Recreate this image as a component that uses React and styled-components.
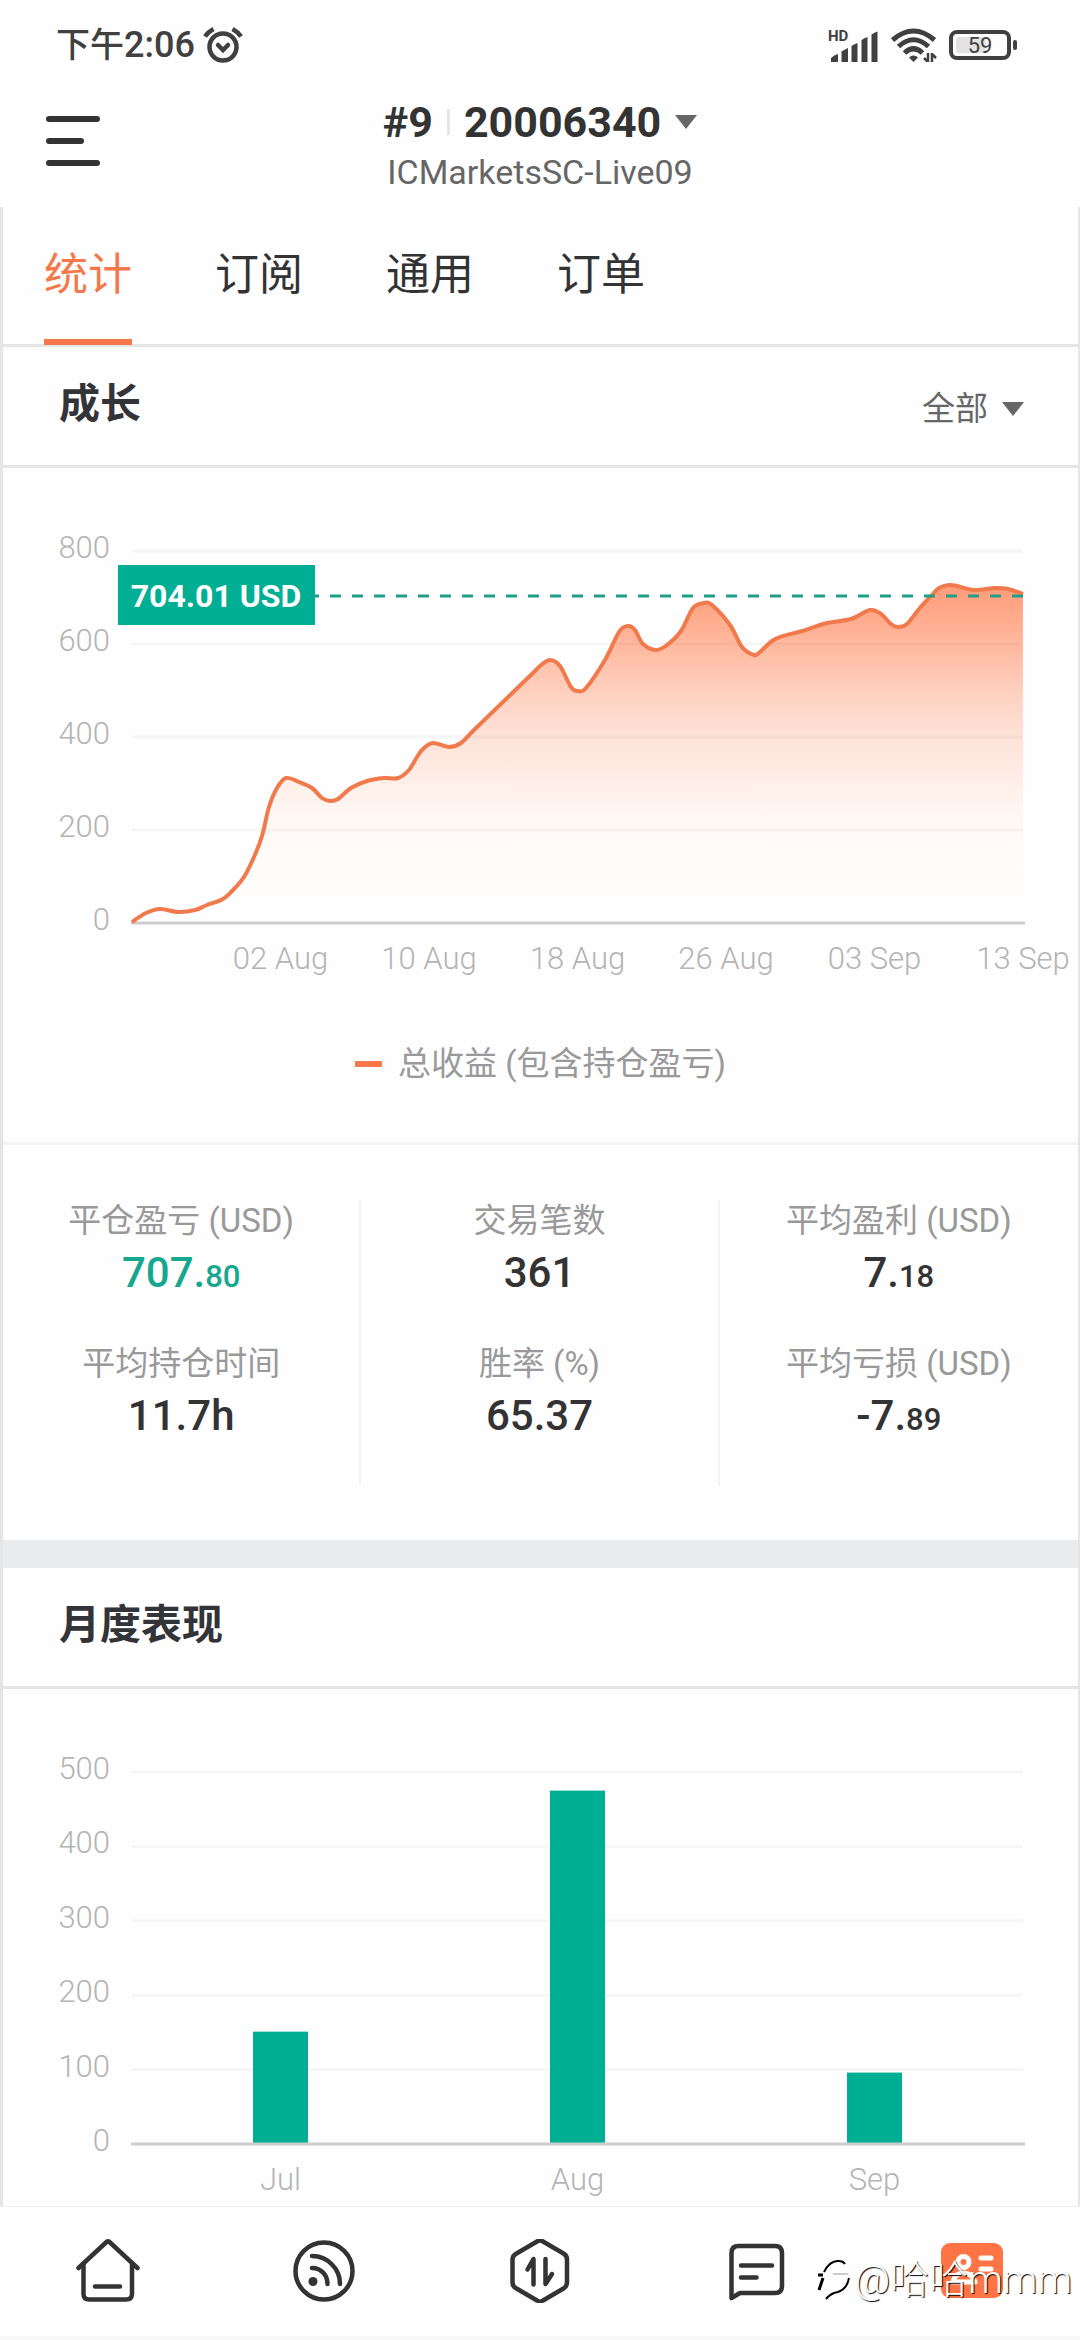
import { useState } from "react";
import styled, { createGlobalStyle } from "styled-components";

const GlobalStyle = createGlobalStyle`
  * {
    box-sizing: border-box;
  }

  body {
    margin: 0;
    background: #fefefe;
    color: #333333;
    font-family: Roboto, "Noto Sans CJK SC", sans-serif;
  }

  button, select {
    padding: 0;
    border: 0;
    background: none;
    color: inherit;
    font: inherit;
  }
`;

const Page = styled.div`
  display: flex;
  flex-direction: column;
  min-height: 100vh;
`;

const StatusBar = styled.div`
  display: flex;
  align-items: center;
  justify-content: space-between;
  height: 90px;
  padding: 0 62px 0 56px;
  color: #404040;
`;

const StatusGroup = styled.div`
  display: flex;
  align-items: center;
  gap: ${(props) => props.$gap};
`;

const Clock = styled.span`
  font-size: 34px;
  font-weight: 500;
  line-height: 44px;
`;

const ClockDigits = styled.span`
  font-size: 36px;
`;

const Header = styled.header`
  display: grid;
  grid-template-columns: 1fr auto 1fr;
  align-items: start;
  padding: 5px 44px 12px;
`;

const MenuButton = styled.button`
  width: 58px;
  height: 58px;
  margin-top: 17px;
`;

const Account = styled.div`
  text-align: center;
`;

const AccountButton = styled.button`
  display: flex;
  align-items: center;
  margin: 0 auto;
  font-size: 43px;
  font-weight: 700;
  line-height: 54px;
`;

const Divider = styled.span`
  width: 3px;
  height: 26px;
  margin: 0 14px;
  background: #e5e5e5;
`;

const Caret = styled.span`
  width: 0;
  border: 11px solid transparent;
  border-top: 14px solid #666666;
  border-bottom: 0;
  margin-left: 14px;
`;

const Server = styled.div`
  color: #666666;
  font-size: 34px;
  line-height: 46px;
`;

const Panel = styled.main`
  flex: 1;
  border-left: 3px solid #e5e5e5;
  border-right: 2px solid #e5e5e5;
`;

const Tabs = styled.nav`
  display: flex;
  gap: 83px;
  padding-left: 41px;
  border-bottom: 3px solid #e5e5e5;
`;

const Tab = styled.button`
  height: 138px;
  margin-bottom: -1px;
  padding: 38px 0 34px;
  border-bottom: 6px solid ${(props) => (props.$active ? "#f47849" : "transparent")};
  color: ${(props) => (props.$active ? "#f47849" : "#333333")};
  font-size: 44px;
  line-height: 60px;
`;

const SectionHead = styled.div`
  display: flex;
  align-items: center;
  justify-content: space-between;
  height: 121px;
  padding: 0 54px 0 56px;
  border-bottom: 3px solid #e5e5e5;
`;

const SectionTitle = styled.h2`
  margin: 0 0 4px;
  color: #333438;
  font-size: 41px;
  font-weight: 700;
  line-height: 60px;
`;

const RangePicker = styled.label`
  display: flex;
  align-items: center;
  margin-top: 5px;
  color: #666666;
`;

const RangeSelect = styled.select`
  appearance: none;
  font-size: 33px;
  line-height: 44px;
`;

const Chart = styled.svg`
  display: block;
  width: 100%;
  height: auto;

  text {
    fill: #b4b4b4;
    font-size: 31px;
    font-weight: 300;
  }

  .badge {
    fill: #ffffff;
    font-size: 32px;
    font-weight: 700;
  }
`;

const Legend = styled.div`
  display: flex;
  align-items: center;
  justify-content: center;
  gap: 16px;
  padding: 54px 0 58px;
  border-bottom: 3px solid #f3f4f4;
  color: #999999;
  font-size: 33px;
  line-height: 40px;
`;

const LegendMark = styled.span`
  width: 27px;
  height: 6px;
  background: #fc7647;
`;

const Stats = styled.div`
  display: grid;
  grid-template-columns: repeat(3, 1fr);
  padding: 55px 0 54px;
`;

const StatColumn = styled.dl`
  margin: 0;
  text-align: center;
  border-right: ${(props) => (props.$last ? "0" : "2px solid #f5f5f5")};
`;

const Stat = styled.div`
  height: 143px;
`;

const StatLabel = styled.dt`
  color: #999999;
  font-size: 33px;
  line-height: 42px;
`;

const StatValue = styled.dd`
  margin: 5px 0 0;
  color: ${(props) => (props.$positive ? "#15a88f" : "#333333")};
  font-size: 42px;
  font-weight: 500;
  line-height: 52px;
`;

const Cents = styled.span`
  font-size: 31px;
`;

const Band = styled.div`
  height: 28px;
  background: #eaebed;
`;

const BottomNav = styled.nav`
  position: relative;
  display: grid;
  grid-template-columns: repeat(5, 1fr);
  height: 134px;
  border-top: 1px solid #f0f0f0;
  border-bottom: 4px solid #f8f8f8;
`;

const NavLink = styled.a`
  display: flex;
  align-items: center;
  justify-content: center;
  padding-bottom: 2px;
  color: #333333;
`;

const Watermark = styled.div`
  position: absolute;
  right: 8px;
  bottom: 32px;
  display: flex;
  align-items: center;
  gap: 4px;
  color: #ffffff;
  font-size: 39px;
  font-weight: 300;
  line-height: 48px;
  text-shadow: 1px 1px 1px #000000;
  pointer-events: none;
`;

const GREEN = "#00ae94";

const TABS = ["统计", "订阅", "通用", "订单"];

const STATS = [
  [
    { label: "平仓盈亏 (USD)", value: "707.", cents: "80", positive: true },
    { label: "平均持仓时间", value: "11.7h" },
  ],
  [
    { label: "交易笔数", value: "361" },
    { label: "胜率 (%)", value: "65.37" },
  ],
  [
    { label: "平均盈利 (USD)", value: "7.", cents: "18" },
    { label: "平均亏损 (USD)", value: "-7.", cents: "89" },
  ],
];

const DATES = ["02 Aug", "10 Aug", "18 Aug", "26 Aug", "03 Sep", "13 Sep"];

const MONTHS = [
  { name: "Jul", value: 151 },
  { name: "Aug", value: 475 },
  { name: "Sep", value: 96 },
];

// x, y inside the 891 x 372 plot
const CURVE = [
  [0, 371], [14, 362], [28, 358], [46, 361], [63, 359], [75, 354], [91, 348], [102, 338],
  [112, 326], [122, 306], [130, 285], [137, 256], [145, 237], [154, 227], [167, 231],
  [180, 237], [190, 247], [198, 250], [206, 248], [219, 237], [235, 230], [252, 227],
  [266, 227], [277, 219], [285, 206], [291, 198], [301, 192], [317, 196], [329, 192],
  [342, 179], [373, 149], [402, 121], [408, 115], [418, 109], [428, 115], [439, 136],
  [446, 140], [454, 137], [473, 109], [487, 81], [496, 75], [503, 79], [511, 93],
  [524, 99], [535, 94], [549, 80], [561, 57], [572, 52], [580, 54], [598, 74],
  [610, 96], [622, 104], [628, 101], [640, 90], [651, 85], [670, 80], [695, 72],
  [719, 68], [738, 59], [749, 63], [759, 73], [766, 76], [775, 73], [787, 58],
  [800, 44], [807, 37], [817, 34], [825, 35], [842, 39], [863, 37], [876, 38], [891, 43],
];

const smooth = (pts) => {
  let d = `M${pts[0][0]} ${pts[0][1]}`;
  for (let i = 0; i < pts.length - 1; i++) {
    const a = pts[i - 1] || pts[i];
    const b = pts[i];
    const c = pts[i + 1];
    const e = pts[i + 2] || c;
    d += ` C${b[0] + (c[0] - a[0]) / 6} ${b[1] + (c[1] - a[1]) / 6}`;
    d += ` ${c[0] - (e[0] - b[0]) / 6} ${c[1] - (e[1] - b[1]) / 6} ${c[0]} ${c[1]}`;
  }
  return d;
};

const Grid = ({ max, step, height }) => {
  const ticks = [];
  for (let v = max; v > 0; v -= step) ticks.push(v);
  const y = (v) => height - (v / max) * height;
  return (
    <g>
      {ticks.map((v) => (
        <line key={v} x1="0" x2="891" y1={y(v)} y2={y(v)} stroke="#000000" strokeOpacity="0.03" strokeWidth="3" />
      ))}
      {[...ticks, 0].map((v) => (
        <text key={v} x="-22" y={y(v) + 7} textAnchor="end">{v}</text>
      ))}
    </g>
  );
};

const GrowthChart = () => {
  const line = smooth(CURVE);
  return (
    <Chart viewBox="0 0 1075 522" role="img" aria-label="成长">
      <defs>
        <linearGradient id="area" x1="0" y1="0" x2="0" y2="1">
          <stop offset="0" stopColor="#ff9b77" />
          <stop offset="0.33" stopColor="#ffd2c2" />
          <stop offset="0.45" stopColor="#fee2d8" />
          <stop offset="0.6" stopColor="#fff0ea" />
          <stop offset="0.73" stopColor="#fffaf7" />
          <stop offset="0.95" stopColor="#fefefe" />
        </linearGradient>
      </defs>
      <g transform="translate(129 83)">
        <path d={`${line} V372 H0 Z`} fill="url(#area)" />
        <Grid max={800} step={200} height={372} />
        <line x1="-1" x2="893" y1="372" y2="372" stroke="#cccccc" strokeWidth="3" />
        <path d={line} fill="none" stroke="#f17a4d" strokeWidth="4" />
        <line x1="0" x2="891" y1="45" y2="45" stroke="#1f9f88" strokeWidth="3" strokeDasharray="11 11" />
        <rect x="-14" y="14" width="197" height="60" fill={GREEN} />
        <text className="badge" x="84" y="56" textAnchor="middle">704.01 USD</text>
        {DATES.map((date, i) => (
          <text key={date} x={148.5 * (i + 1)} y="418" textAnchor="middle">{date}</text>
        ))}
      </g>
    </Chart>
  );
};

const MonthChart = () => (
  <Chart viewBox="0 0 1075 516" role="img" aria-label="月度表现">
    <g transform="translate(129 83)">
      <Grid max={500} step={100} height={372} />
      {MONTHS.map(({ name, value }, i) => {
        const x = 148.5 + i * 297;
        const h = (value / 500) * 372;
        return (
          <g key={name}>
            <rect x={x - 27.5} y={372 - h} width="55" height={h} fill={GREEN} />
            <text x={x} y="418" textAnchor="middle">{name}</text>
          </g>
        );
      })}
      <line x1="-1" x2="893" y1="372" y2="372" stroke="#cccccc" strokeWidth="3" />
    </g>
  </Chart>
);

const AlarmIcon = () => (
  <svg width="40" height="36" viewBox="0 0 40 36" fill="none" stroke="currentColor" strokeWidth="4.500">
    <circle cx="20" cy="20" r="13.500" />
    <path d="M15 18l5 5 5-5" strokeLinecap="round" />
    <path d="M2 9.500Q5 5 10.500 2M38 9.500Q35 5 29.500 2" />
  </svg>
);

const SignalIcon = () => (
  <svg width="52" height="40" viewBox="-1 -4 52 40" fill="currentColor">
    <text x="0" y="12" fontSize="15" fontWeight="700">HD</text>
    <path d="M3 33v-4q3-3 7-4v8zM13.500 33V22.500q3-2 6.500-3.500v14zM23.500 33V17q3-2 6-3v19zM33.500 33V11q3-2 6-3v25zM43.500 33V5.500q3-2 6-3V33z" />
  </svg>
);

const WifiIcon = () => (
  <svg width="46" height="34" viewBox="0 0 46 34" fill="none" stroke="currentColor" strokeWidth="5">
    <path d="M1.500 12Q22.500-6 43.500 12M7.500 18.500Q22.500 5 37.500 18.500M13.500 25Q22.500 16.500 31.500 25" />
    <path d="M18 29.500q4.500-4 9 0L22.500 34z" fill="currentColor" stroke="none" />
    <path d="M37 25v9.500M37 34l-4-4M41 34.500V25M41 26l4 4" strokeWidth="2.500" />
  </svg>
);

const BatteryIcon = () => (
  <svg width="69" height="32" viewBox="0 0 69 32">
    <rect x="7" y="8" width="30" height="16" rx="3" fill="#e3e3e3" />
    <rect x="2" y="3" width="58" height="26" rx="6" fill="none" stroke="currentColor" strokeWidth="4" />
    <rect x="64" y="11" width="4" height="10" rx="2" fill="currentColor" />
    <text x="31" y="24" fontSize="22" textAnchor="middle" fill="currentColor">59</text>
  </svg>
);

const MenuIcon = () => (
  <svg width="58" height="58" viewBox="0 0 58 58" stroke="currentColor" strokeWidth="6" strokeLinecap="round">
    <path d="M5 7h48M5 29h32M5 51h48" />
  </svg>
);

const NavIcon = ({ children }) => (
  <svg
    width="64"
    height="64"
    viewBox="0 0 64 64"
    fill="none"
    stroke="currentColor"
    strokeWidth="4.500"
    strokeLinecap="round"
    strokeLinejoin="round"
  >
    {children}
  </svg>
);

const HomeIcon = () => (
  <NavIcon>
    <path d="M2.500 29L30.500 3q1.500-1.200 3 0L61.500 29" />
    <path d="M7.500 25v30q0 5.500 5.500 5.500h37q6 0 6-5.500V25M19 47.500h25" />
  </NavIcon>
);

const SignalsIcon = () => (
  <NavIcon>
    <circle cx="32" cy="32" r="28.500" />
    <path d="M20 17q12 0 20 8.500 8 8 8 19.500M20 29q7 0 11.500 5 4 4.500 4 11" />
    <circle cx="21" cy="42.500" r="4.500" fill="currentColor" stroke="none" />
  </NavIcon>
);

const TradeIcon = () => (
  <NavIcon>
    <path d="M29 2.500q3-2 6 0l20.500 12q3.500 2 3.500 6v23q0 4-3.500 6L35 61.500q-3 2-6 0l-20.500-12Q4.500 47.500 4.500 43.500v-23q0-4 4-6z" />
    <path d="M19.500 30.500l6-10.500v25.500M37.500 20v25l6.500-10" />
  </NavIcon>
);

const ChatIcon = () => (
  <NavIcon>
    <path d="M7.500 59V14q0-7 7-7h36.500q7 0 7 7v33q0 7-7 7H16z" />
    <path d="M17 26.500h31M17 38.500h15.500" />
  </NavIcon>
);

const ProfileIcon = () => (
  <NavIcon>
    <rect x="1" y="4" width="62" height="55" rx="9" fill="#ff7444" stroke="none" />
    <g stroke="#ffffff" strokeWidth="5">
      <circle cx="23.500" cy="23" r="5.500" />
      <path d="M13 43q2-9 10.500-9T35 43zM41 19h10M41 30h10" />
    </g>
  </NavIcon>
);

const WatermarkIcon = () => (
  <svg width="34" height="42" viewBox="0 0 34 42" fill="none" stroke="#000000" strokeWidth="2">
    <path d="M7 13Q13 1 22 2q4 0 6 3M32 19q-2 11-11 14-7 1-12 7" />
    <path d="M1 16h5M6 19L2 31" strokeWidth="3" />
    <path d="M16 15h15" stroke="#999999" strokeWidth="1" />
  </svg>
);

const NAV = [
  { label: "首页", Icon: HomeIcon },
  { label: "信号", Icon: SignalsIcon },
  { label: "交易", Icon: TradeIcon },
  { label: "消息", Icon: ChatIcon },
  { label: "我的", Icon: ProfileIcon },
];

const App = () => {
  const [tab, setTab] = useState(0);

  return (
    <Page>
      <GlobalStyle />
      <StatusBar>
        <StatusGroup $gap="8px">
          <Clock>下午<ClockDigits>2:06</ClockDigits></Clock>
          <AlarmIcon />
        </StatusGroup>
        <StatusGroup $gap="12px">
          <SignalIcon />
          <WifiIcon />
          <BatteryIcon />
        </StatusGroup>
      </StatusBar>

      <Header>
        <MenuButton aria-label="菜单"><MenuIcon /></MenuButton>
        <Account>
          <AccountButton>
            #9<Divider />20006340<Caret />
          </AccountButton>
          <Server>ICMarketsSC-Live09</Server>
        </Account>
      </Header>

      <Panel>
        <Tabs>
          {TABS.map((name, i) => (
            <Tab key={name} $active={i === tab} onClick={() => setTab(i)}>{name}</Tab>
          ))}
        </Tabs>

        <SectionHead>
          <SectionTitle>成长</SectionTitle>
          <RangePicker>
            <RangeSelect aria-label="时间范围">
              <option>全部</option>
            </RangeSelect>
            <Caret />
          </RangePicker>
        </SectionHead>
        <GrowthChart />
        <Legend>
          <LegendMark />
          总收益 (包含持仓盈亏)
        </Legend>
        <Stats>
          {STATS.map((column, i) => (
            <StatColumn key={i} $last={i === STATS.length - 1}>
              {column.map((stat) => (
                <Stat key={stat.label}>
                  <StatLabel>{stat.label}</StatLabel>
                  <StatValue $positive={stat.positive}>
                    {stat.value}
                    {stat.cents && <Cents>{stat.cents}</Cents>}
                  </StatValue>
                </Stat>
              ))}
            </StatColumn>
          ))}
        </Stats>

        <Band />
        <SectionHead>
          <SectionTitle>月度表现</SectionTitle>
        </SectionHead>
        <MonthChart />
      </Panel>

      <BottomNav>
        {NAV.map(({ label, Icon }) => (
          <NavLink key={label} href="#" aria-label={label}><Icon /></NavLink>
        ))}
        <Watermark>
          <WatermarkIcon />
          @哈哈mmm
        </Watermark>
      </BottomNav>
    </Page>
  );
};

export default App;
